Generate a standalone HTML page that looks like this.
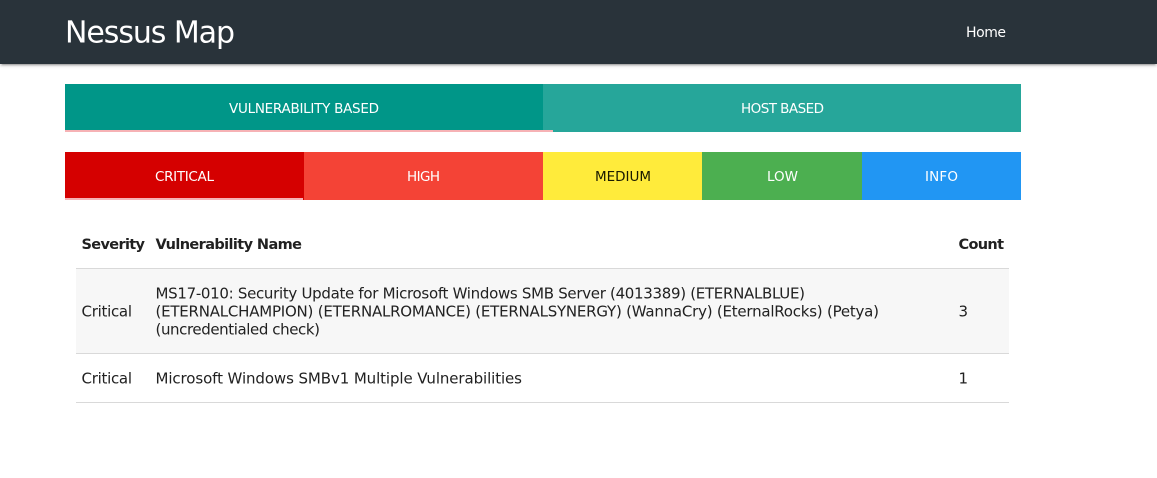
<!DOCTYPE html>
<html lang="en">
<head>
<meta charset="utf-8">
<title>Nessus Map</title>
<style>
html,body{margin:0;padding:0;background:#fff;width:1157px;height:478px;overflow:hidden}
.b{position:absolute}
svg{position:absolute;left:0;top:0}
text{font-family:"DejaVu Sans","Liberation Sans",sans-serif;font-size:15px;fill:#212121}
.w{fill:#fff;font-size:13.5px}
</style>
</head>
<body>
<div class="b" style="left:0;top:0;width:1157px;height:64px;background:#29333a;box-shadow:0 2px 2px 0 rgba(0,0,0,.14),0 1px 5px 0 rgba(0,0,0,.12),0 3px 1px -2px rgba(0,0,0,.2)"></div>
<div class="b" style="left:65px;top:84px;width:478px;height:48px;background:#009688"></div>
<div class="b" style="left:543px;top:84px;width:478px;height:48px;background:#26a69a"></div>
<div class="b" style="left:65px;top:130px;width:488px;height:2px;background:#f6b2b5"></div>
<div class="b" style="left:65px;top:152px;width:239px;height:48px;background:#d50000"></div>
<div class="b" style="left:304px;top:152px;width:239px;height:48px;background:#f44336"></div>
<div class="b" style="left:543px;top:152px;width:159px;height:48px;background:#ffeb3b"></div>
<div class="b" style="left:702px;top:152px;width:159.500px;height:48px;background:#4caf50"></div>
<div class="b" style="left:861.500px;top:152px;width:159.500px;height:48px;background:#2196f3"></div>
<div class="b" style="left:65px;top:198px;width:238px;height:2px;background:#f6b2b5"></div>
<div class="b" style="left:76px;top:269px;width:933px;height:84px;background:#f7f7f7"></div>
<div class="b" style="left:76px;top:268px;width:933px;height:1px;background:#d9d9d9"></div>
<div class="b" style="left:76px;top:353px;width:933px;height:1px;background:#d9d9d9"></div>
<div class="b" style="left:76px;top:402px;width:933px;height:1px;background:#d9d9d9"></div>
<svg width="1157" height="478" viewBox="0 0 1157 478" xmlns="http://www.w3.org/2000/svg">
<text x="65" y="42.500" textLength="170" style="font-size:30px;fill:#fff">Nessus Map</text>
<text x="966" y="37" textLength="40" class="w" style="font-size:14px">Home</text>
<text x="229" y="113" textLength="150" class="w">VULNERABILITY BASED</text>
<text x="741" y="113" textLength="83" class="w">HOST BASED</text>
<text x="155" y="181" textLength="59" class="w">CRITICAL</text>
<text x="407" y="181" textLength="33" class="w">HIGH</text>
<text x="595" y="181" textLength="56" class="w" style="fill:#1a1a00">MEDIUM</text>
<text x="767" y="181" textLength="31" class="w">LOW</text>
<text x="925" y="181" textLength="33" class="w">INFO</text>
<text x="81.500" y="249" textLength="63.500" style="font-weight:bold;font-size:14.500px">Severity</text>
<text x="155.500" y="249" textLength="146.500" style="font-weight:bold;font-size:14.500px">Vulnerability Name</text>
<text x="958.500" y="249" textLength="45.500" style="font-weight:bold;font-size:14.500px">Count</text>
<text x="81.500" y="316.500" textLength="50.500">Critical</text>
<text x="155.500" y="298.500" textLength="649.500">MS17-010: Security Update for Microsoft Windows SMB Server (4013389) (ETERNALBLUE)</text>
<text x="155.500" y="316.500" textLength="723.500">(ETERNALCHAMPION) (ETERNALROMANCE) (ETERNALSYNERGY) (WannaCry) (EternalRocks) (Petya)</text>
<text x="155.500" y="334.500" textLength="164.500">(uncredentialed check)</text>
<text x="958.500" y="316.500">3</text>
<text x="81.500" y="383.500" textLength="50.500">Critical</text>
<text x="155.500" y="383.500" textLength="366.500">Microsoft Windows SMBv1 Multiple Vulnerabilities</text>
<text x="958.500" y="383.500">1</text>
</svg>
</body>
</html>
